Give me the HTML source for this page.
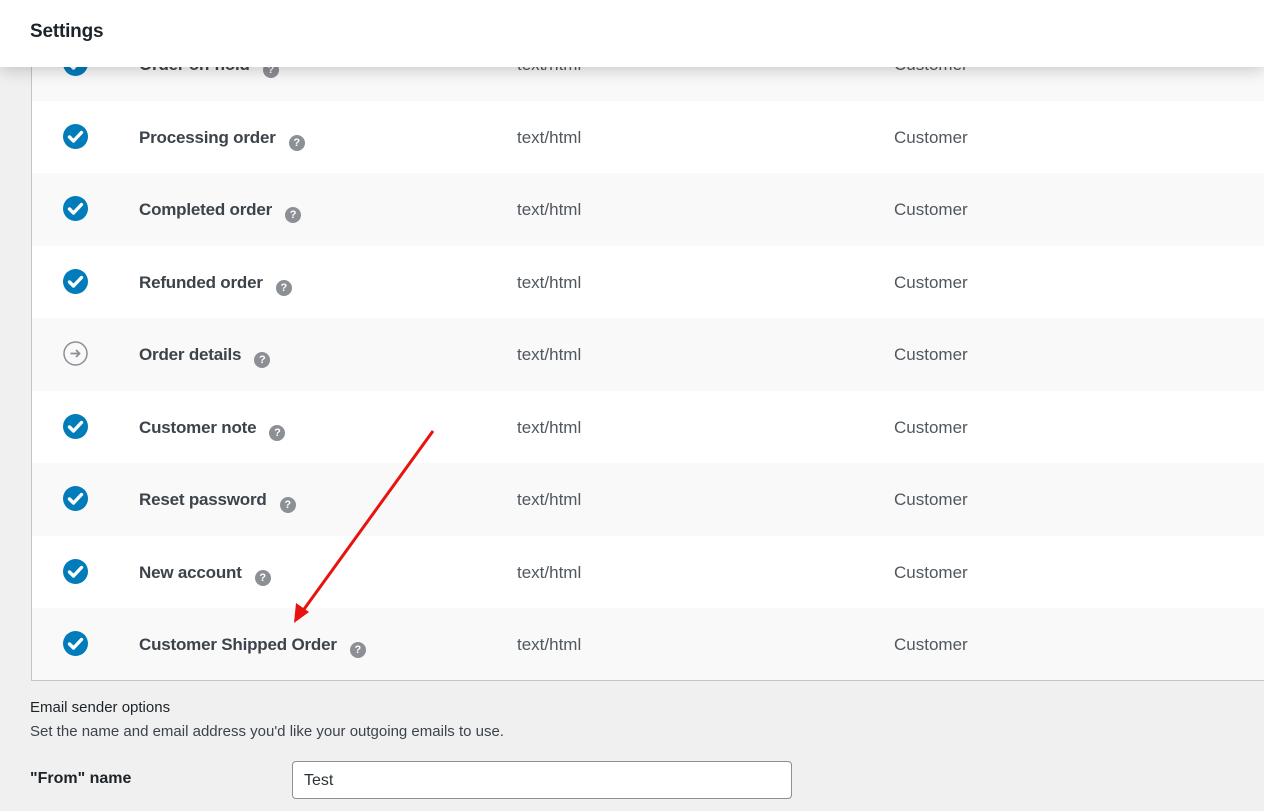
<!DOCTYPE html>
<html><head><meta charset="utf-8">
<style>
*{margin:0;padding:0;box-sizing:border-box}
body{width:1264px;height:811px;overflow:hidden;background:#f0f0f1;font-family:"Liberation Sans",sans-serif;color:#3c434a;position:relative}
.hdr{position:absolute;left:0;top:0;width:1264px;height:67px;background:#fff;box-shadow:0 3px 16px rgba(0,0,0,.2);z-index:5}
.hdr span{position:absolute;left:30px;top:21px;font-size:19px;font-weight:bold;color:#1d2327;letter-spacing:-.2px}
.tbl{position:absolute;left:31px;top:28px;width:1240px;height:653px;border-left:1px solid #c3c4c7;background:#fff}
.bb{position:absolute;left:31px;top:680px;width:1240px;height:1px;background:#c3c4c7}
.row{position:absolute;left:0;width:1240px;height:72.5px}
.row.g{background:#f9f9f9}
.ic{position:absolute;left:31px;top:23px;width:25px;height:25px}
.nm{position:absolute;left:107px;top:27px;font-size:17px;font-weight:bold;color:#3c434a;letter-spacing:-.2px}
.q{display:inline-block;width:16px;height:16px;border-radius:50%;background:#8c8f94;color:#fff;font-size:11px;line-height:16px;text-align:center;vertical-align:-3px;margin-left:13px;font-weight:bold}
.ty{position:absolute;left:485px;top:27px;font-size:17px;color:#50575e}
.cu{position:absolute;left:862px;top:27px;font-size:17px;color:#50575e}
.t1{position:absolute;left:30px;top:699px;font-size:15px;color:#1d2327}
.t2{position:absolute;left:30px;top:723px;font-size:15px;color:#3c434a}
.t3{position:absolute;left:30px;top:770px;font-size:16px;font-weight:bold;color:#1d2327}
.inp{position:absolute;left:292px;top:761px;width:500px;height:38px;background:#fff;border:1px solid #8c8f94;border-radius:4px;font-size:16px;color:#2c3338;padding:10px 0 0 11px}
</style></head><body>
<div class="hdr"><span>Settings</span></div>
<div class="tbl">
<script>
const rows=[["Order on-hold",1],["Processing order",1],["Completed order",1],["Refunded order",1],["Order details",0],["Customer note",1],["Reset password",1],["New account",1],["Customer Shipped Order",1]];
const chk='<svg class="ic" viewBox="0 0 25 25"><circle cx="12.5" cy="12.5" r="12.5" fill="#007cba"/><path d="M6.5 13l4 4 8-8.5" stroke="#fff" stroke-width="3.4" fill="none" stroke-linecap="round" stroke-linejoin="round"/></svg>';
const arr='<svg class="ic" viewBox="0 0 25 25"><circle cx="12.5" cy="12.5" r="11.5" fill="none" stroke="#8c8f94" stroke-width="1.5"/><path d="M7.5 12.5h9M13 9l3.5 3.5L13 16" stroke="#8c8f94" stroke-width="1.8" fill="none"/></svg>';
rows.forEach((r,i)=>{document.write('<div class="row'+(i%2==0?' g':'')+'" style="top:'+(i*72.5)+'px">'+(r[1]?chk:arr)+'<div class="nm">'+r[0]+'<span class="q">?</span></div><div class="ty">text/html</div><div class="cu">Customer</div></div>')});
</script>
</div>
<div class="bb"></div>
<svg style="position:absolute;left:0;top:0;z-index:3" width="1264" height="811"><line x1="433" y1="431" x2="302" y2="612" stroke="#e8130f" stroke-width="3"/><polygon points="294,623 296,603 309,612" fill="#e8130f"/></svg>
<div class="t1">Email sender options</div>
<div class="t2">Set the name and email address you'd like your outgoing emails to use.</div>
<div class="t3">"From" name</div>
<div class="inp">Test</div>
</body></html>
